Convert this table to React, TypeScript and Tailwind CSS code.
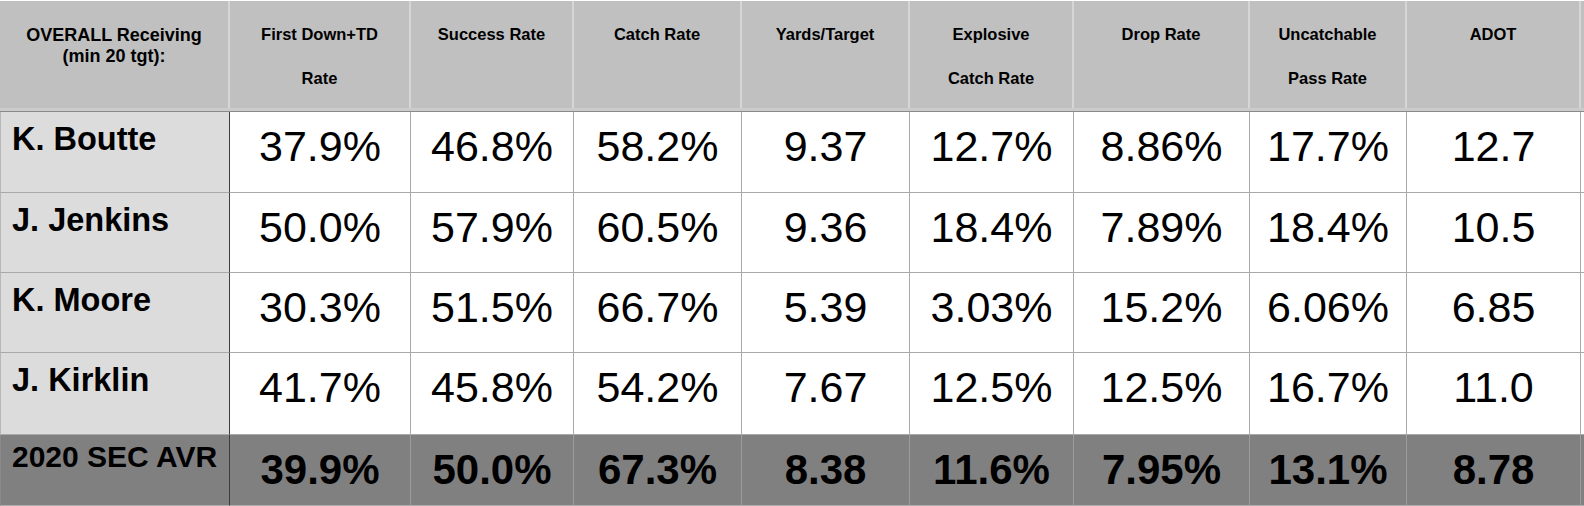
import React from "react";

const HEADERS: { lines: string[] }[] = [
  { lines: ["First Down+TD", "", "Rate"] },
  { lines: ["Success Rate"] },
  { lines: ["Catch Rate"] },
  { lines: ["Yards/Target"] },
  { lines: ["Explosive", "", "Catch Rate"] },
  { lines: ["Drop Rate"] },
  { lines: ["Uncatchable", "", "Pass Rate"] },
  { lines: ["ADOT"] },
];

const PLAYERS = [
  { name: "K. Boutte", stats: ["37.9%", "46.8%", "58.2%", "9.37", "12.7%", "8.86%", "17.7%", "12.7"] },
  { name: "J. Jenkins", stats: ["50.0%", "57.9%", "60.5%", "9.36", "18.4%", "7.89%", "18.4%", "10.5"] },
  { name: "K. Moore", stats: ["30.3%", "51.5%", "66.7%", "5.39", "3.03%", "15.2%", "6.06%", "6.85"] },
  { name: "J. Kirklin", stats: ["41.7%", "45.8%", "54.2%", "7.67", "12.5%", "12.5%", "16.7%", "11.0"] },
];

const AVERAGE = { name: "2020 SEC AVR", stats: ["39.9%", "50.0%", "67.3%", "8.38", "11.6%", "7.95%", "13.1%", "8.78"] };

function HeaderCell({ children, last }: { children?: React.ReactNode; last?: boolean }) {
  return (
    <div className="flex flex-col bg-[#c0c0c0] border-b border-[#8a8a8a]">
      <div className={last ? "flex-1" : "flex-1 border-r-2 border-[#d6d6d6]"}>{children}</div>
      <div className="h-[3px] bg-[#cccccc]" />
    </div>
  );
}

export default function App() {
  return (
    <div className="w-[1584px] h-[506px] bg-white pt-[1px] overflow-hidden font-['Liberation_Sans',Arial,sans-serif] text-black">
      <div className="grid grid-cols-[230px_181px_163px_168px_168px_164px_176px_157px_174px_1fr] grid-rows-[111px_81px_80px_80px_82px_71px]">
        {/* header row */}
        <HeaderCell>
          <div className="pt-[24px] text-center text-[18px] font-bold leading-[21px]">
            <div>OVERALL Receiving</div>
            <div>(min 20 tgt):</div>
          </div>
        </HeaderCell>
        {HEADERS.map((h, i) => (
          <HeaderCell key={i}>
            <div className="pt-[22px] text-center text-[16.5px] font-bold leading-[22px]">
              {h.lines.map((line, j) => (
                <div key={j} className="h-[22px]">
                  {line}
                </div>
              ))}
            </div>
          </HeaderCell>
        ))}
        <HeaderCell last />

        {/* player rows */}
        {PLAYERS.map((p) => (
          <React.Fragment key={p.name}>
            <div className="bg-[#dcdcdc] border-l border-[#b8b8b8] border-r border-r-[#3c3c3c] border-b border-b-[#a9a9a9] pl-[11px] pt-[9px] text-[32.5px] font-bold leading-[36px]">
              {p.name}
            </div>
            {p.stats.map((s, i) => (
              <div
                key={i}
                className="bg-white border-r border-b border-[#a9a9a9] pt-[10px] text-center text-[43px] leading-[48px]"
              >
                {s}
              </div>
            ))}
            <div className="bg-white border-b border-[#a9a9a9]" />
          </React.Fragment>
        ))}

        {/* conference average */}
        <div className="bg-[#808080] border-l border-[#8a8a8a] border-r border-r-[#3c3c3c] border-b border-b-[#b0b0b0] pl-[11px] pt-[5px] text-[30px] font-bold leading-[34px]">
          {AVERAGE.name}
        </div>
        {AVERAGE.stats.map((s, i) => (
          <div
            key={i}
            className="bg-[#808080] border-r border-[#9c9c9c] border-b border-b-[#b0b0b0] pt-[11px] text-center text-[42px] font-bold leading-[48px]"
          >
            {s}
          </div>
        ))}
        <div className="bg-[#808080] border-b border-[#b0b0b0]" />
      </div>
    </div>
  );
}
